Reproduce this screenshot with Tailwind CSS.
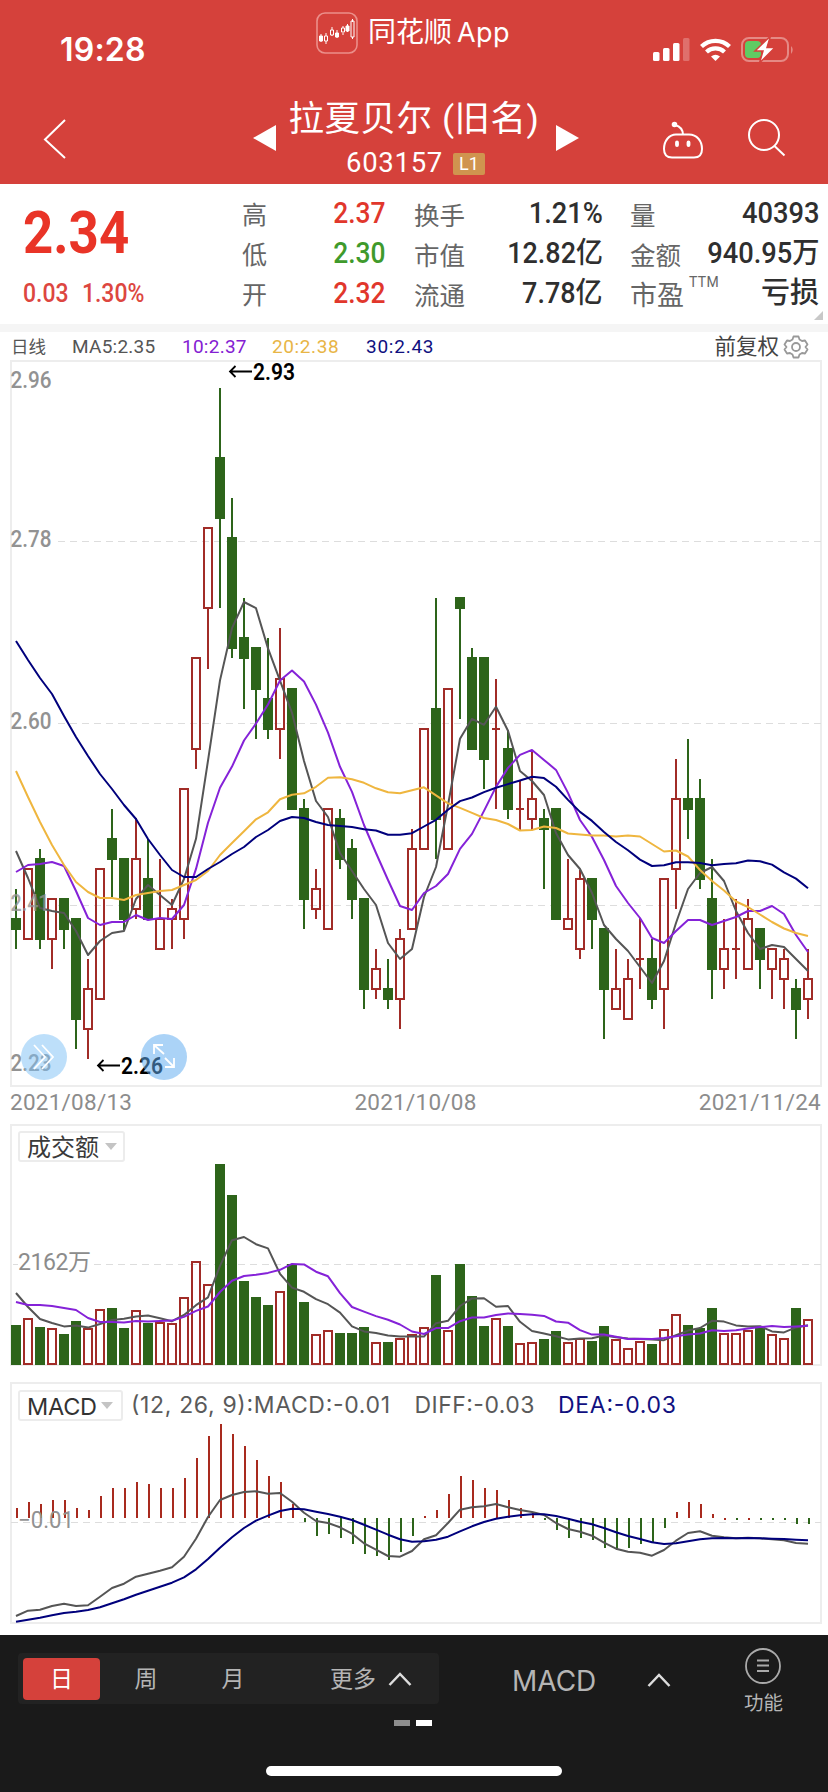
<!DOCTYPE html>
<html lang="zh-CN">
<head>
    <meta charset="UTF-8">
    <meta name="viewport" content="width=device-width, initial-scale=1.0">
    <title>拉夏贝尔 603157</title>
    <script src="https://cdn.jsdelivr.net/npm/@tailwindcss/browser@4"></script>
</head>
<body class="w-[828px] h-[1792px] overflow-hidden bg-white font-['Roboto','Noto_Sans_CJK_SC',sans-serif]">
    <!-- header -->
    <header class="h-[184px] bg-[#d5413b] text-white">
        <div class="h-[94px] flex items-start">
            <div class="w-[316px] pl-[60px] pt-[30px] font-['Inter'] font-semibold text-[32px] leading-[40px] tracking-[0.200px]">19:28</div>
            <div class="w-[337px] flex items-center pt-[10px] gap-[10px]">
                <svg width="42" height="42" viewBox="0 0 42 42" fill="none" stroke="#fff">
                    <rect x="1" y="1" width="40" height="40" rx="8" stroke="#eb8f8a" stroke-width="1.6"/>
                    <path d="M5 22v8M10 21v3M10 29v3M16 15v3M16 23v1M21 18v8M27 14v2M27 21v2M31.500 12v8M36.500 7v3M36.500 25v2" stroke-width="1"/>
                    <path d="M3.500 24h3v5h-3zM19.500 21h3v4h-3zM30 14h3v5h-3z" fill="#fff"/>
                    <path d="M8.500 24h3v5h-3zM14.500 18h3v5h-3zM25.500 16h3v4h-3zM35 9h3v16h-3z" stroke-width="1"/>
                </svg>
                <span class="text-[28px] leading-[44px] font-normal font-['Inter','Noto_Sans_CJK_SC',sans-serif] whitespace-nowrap">同花顺<span class="ml-[5px] text-[27px] tracking-[0.400px]">App</span></span>
            </div>
            <svg class="mt-[35px]" width="145" height="28" viewBox="653 35 145 28">
                <g fill="#fff">
                    <rect x="653" y="52" width="6.500" height="9" rx="1.500"/>
                    <rect x="663" y="48" width="6.500" height="13" rx="1.500"/>
                    <rect x="673" y="43" width="6.500" height="18" rx="1.500"/>
                    <rect x="683" y="38" width="6.500" height="23" rx="1.500" opacity=".25"/>
                </g>
                <g fill="none" stroke="#fff" stroke-width="4.200">
                    <path d="M701.500 46.500a20 20 0 0 1 28 0"/>
                    <path d="M706.500 52a13 13 0 0 1 18 0"/>
                </g>
                <path d="M711 56.500q4.500-3.500 9 0L715.500 61z" fill="#fff"/>
                <rect x="742" y="38" width="46" height="23" rx="7" fill="none" stroke="#e58a85" stroke-width="2"/>
                <path d="M791 46q3.500 3.500 0 8z" fill="#e58a85"/>
                <rect x="745" y="41" width="16" height="17" rx="4" fill="#5fcb63"/>
                <path d="M770.500 36L755 51h8l-3.500 12L775 47.500h-8z" fill="#fff" stroke="#d5413b" stroke-width="1.500"/>
            </svg>
        </div>
        <div class="h-[90px] flex items-start">
            <svg class="ml-[42px] mt-[23px]" width="26" height="44" viewBox="0 0 26 44" fill="none" stroke="#fff" stroke-width="2"><path d="M23 3L3 22.500L23 41"/></svg>
            <svg class="ml-[185px] mt-[31px]" width="23" height="26" viewBox="0 0 23 26" fill="#fff"><path d="M0 13L23 0v26z"/></svg>
            <div class="w-[280px] flex flex-col items-center">
                <h1 class="h-[52px] text-[35.500px] leading-[50px] font-normal whitespace-nowrap tracking-[0.500px] pr-[4px]">拉夏贝尔 (旧名)</h1>
                <div class="flex items-center gap-[10px] pt-[2px] pr-[1px]">
                    <span class="text-[27.500px] leading-[30px] tracking-[0.700px]">603157</span>
                    <span class="w-[32px] h-[22px] mt-[1px] bg-[#d0944f] text-[18px] leading-[22px] text-center rounded-[2px]">L1</span>
                </div>
            </div>
            <svg class="mt-[31px]" width="23" height="26" viewBox="0 0 23 26" fill="#fff"><path d="M23 13L0 0v26z"/></svg>
            <svg class="ml-[82px] mt-[26px]" width="44" height="40" viewBox="0 0 44 40" fill="none" stroke="#fff" stroke-width="2">
                <path d="M22 15C22 8 18 6 14 5"/>
                <circle cx="13.500" cy="4.500" r="1.800" fill="#fff"/>
                <path d="M15 14.500H28C36 14.500 41 21 41 29C41 35 38 37.500 33 37.500H11C6 37.500 3 35 3 29C3 21 8 14.500 15 14.500z"/>
                <path d="M16 22.500v2.500M27.500 22.500v2.500" stroke-width="3.800" stroke-linecap="round"/>
            </svg>
            <svg class="ml-[42px] mt-[24px]" width="40" height="40" viewBox="0 0 40 40" fill="none" stroke="#fff" stroke-width="2">
                <circle cx="17" cy="17" r="15"/><path d="M27.500 28L37.500 37.500"/>
            </svg>
        </div>
    </header>

    <!-- quote -->
    <section class="h-[140px] flex relative text-[#2f2f2f]">
        <div class="w-[242px] pl-[23px]">
            <div class="mt-[19px] h-[60px] text-[60px] leading-[60px] font-bold text-[#e93427] origin-left scale-x-[.88]">2.34</div>
            <div class="mt-[15px] flex text-[25px] leading-[32px] font-medium text-[#dd4640] origin-left scale-x-[.92]"><span class="w-[64px]">0.03</span><span>1.30%</span></div>
        </div>
        <div class="w-[144px] pt-[10px] text-[29px] font-medium">
            <div class="h-[40px] flex items-center justify-between"><span class="text-[25px] font-normal text-[#666] pt-[4px]">高</span><span class="origin-right scale-x-[.91] text-[#e1372c]">2.37</span></div>
            <div class="h-[40px] flex items-center justify-between"><span class="text-[25px] font-normal text-[#666] pt-[4px]">低</span><span class="origin-right scale-x-[.91] text-[#3f9a2c]">2.30</span></div>
            <div class="h-[40px] flex items-center justify-between"><span class="text-[25px] font-normal text-[#666] pt-[4px]">开</span><span class="origin-right scale-x-[.91] text-[#e1372c]">2.32</span></div>
        </div>
        <div class="ml-[28px] w-[189px] pt-[10px] text-[29px] font-medium">
            <div class="h-[40px] flex items-center justify-between"><span class="text-[25.500px] font-normal text-[#666] pt-[4px]">换手</span><span class="origin-right scale-x-[.94]">1.21%</span></div>
            <div class="h-[40px] flex items-center justify-between"><span class="text-[25.500px] font-normal text-[#666] pt-[4px]">市值</span><span class="origin-right scale-x-[.93]">12.82亿</span></div>
            <div class="h-[40px] flex items-center justify-between"><span class="text-[25.500px] font-normal text-[#666] pt-[4px]">流通</span><span class="origin-right scale-x-[.93]">7.78亿</span></div>
        </div>
        <div class="ml-[27px] w-[189px] pt-[10px] text-[29px] font-medium">
            <div class="h-[40px] flex items-center justify-between"><span class="text-[25.500px] font-normal text-[#666] pt-[4px]">量</span><span class="origin-right scale-x-[.94]">40393</span></div>
            <div class="h-[40px] flex items-center justify-between whitespace-nowrap"><span class="text-[25.500px] font-normal text-[#666] pt-[4px]">金额</span><span class="origin-right scale-x-[.94]">940.95万</span></div>
            <div class="h-[40px] flex items-center justify-between"><span class="flex text-[27px] font-normal text-[#666] pt-[5px]">市盈<span class="ml-[5px] text-[14px] leading-[12px] tracking-[0.300px]">TTM</span></span><span>亏损</span></div>
        </div>
        <svg class="absolute right-[5px] top-[127px]" width="9" height="9"><path d="M9 0v9H0z" fill="#c8c8c8"/></svg>
    </section>
    <div class="h-2 bg-[#f5f5f5]"></div>

    <!-- moving averages -->
    <div class="h-[29px] pt-px pl-[11px] pr-[19px] flex items-center text-[19px] whitespace-nowrap text-[#555] tracking-[0.250px]">
        <span class="w-[61px] text-[17.500px] tracking-normal">日线</span>
        <span class="w-[110px]">MA5:2.35</span>
        <span class="w-[90px] text-[#8420d2]">10:2.37</span>
        <span class="w-[94px] text-[#e8b546] tracking-[0.600px]">20:2.38</span>
        <span class="text-[#10107f] tracking-[0.750px]">30:2.43</span>
        <span class="ml-auto text-[21.500px] text-[#444] tracking-normal">前复权</span>
        <svg class="ml-[4px]" width="26" height="26" viewBox="0 0 26 26" fill="none" stroke="#999" stroke-width="1.800" stroke-linejoin="round">
            <path d="M10.500 2.500h5l1 3 2.500 1.500 3-.5 2.500 4-2 2.500 2 2.500-2.500 4-3-.5-2.500 1.500-1 3h-5l-1-3-2.500-1.500-3 .5-2.500-4 2-2.500-2-2.500 2.500-4 3 .5 2.500-1.500z"/>
            <circle cx="13" cy="13" r="4"/>
        </svg>
    </div>

    <!-- candles -->
    <svg class="block overflow-visible" width="828" height="726" viewBox="0 361 828 726" font-size="23">
        <rect x="11" y="361" width="810" height="725" fill="none" stroke="#ededed" stroke-width="2"/>
        <path d="M58 541.500H821M58 723.500H821M58 905.500H821" stroke="#ddd" stroke-dasharray="7 5"/>
        <g id="candles"></g>
        <g id="averages" fill="none" stroke-width="2" stroke-linejoin="round"></g>
        <g fill="#929292" font-weight="500">
            <text x="10.500" y="388" textLength="41" lengthAdjust="spacingAndGlyphs">2.96</text>
            <text x="10.500" y="547" textLength="41" lengthAdjust="spacingAndGlyphs">2.78</text>
            <text x="10.500" y="729" textLength="41" lengthAdjust="spacingAndGlyphs">2.60</text>
            <text x="10.500" y="911" textLength="39" lengthAdjust="spacingAndGlyphs" fill-opacity=".8">2.41</text>
            <text x="10.500" y="1071" textLength="41" lengthAdjust="spacingAndGlyphs">2.23</text>
        </g>
        <path d="M252 371.500H230M235.500 366l-5.500 5.500 5.500 5.500M120 1065.500H98M103.500 1060l-5.500 5.500 5.500 5.500" fill="none" stroke="#000" stroke-width="1.800"/>
        <text x="253" y="379.500" textLength="42" lengthAdjust="spacingAndGlyphs" font-weight="600">2.93</text>
        <text x="121" y="1073.500" textLength="42" lengthAdjust="spacingAndGlyphs" font-weight="600">2.26</text>
        <circle cx="44" cy="1057" r="23" fill="#7cbff6" fill-opacity=".5"/>
        <circle cx="164" cy="1057" r="23" fill="#60acf0" fill-opacity=".53"/>
        <path d="M34 1045l11 12-11 12M42 1045l11 12-11 12M164 1054l-10-9M154 1054v-9h9M165 1058l9 9M165 1067h9v-9" fill="none" stroke="#fff" stroke-width="1.800"/>
    </svg>
    <div class="h-[37px] pb-[5px] pl-[10px] pr-[7px] flex items-center justify-between text-[22.500px] text-[#8c8c8c] tracking-[0.250px]">
        <span>2021/08/13</span><span>2021/10/08</span><span>2021/11/24</span>
    </div>

    <!-- turnover -->
    <svg class="block" width="828" height="258" viewBox="0 1124 828 258">
        <rect x="11" y="1125" width="810" height="240" fill="none" stroke="#ededed" stroke-width="2"/>
        <path d="M13 1264.500h5M94 1264.500H821" stroke="#ddd" stroke-dasharray="7 5"/>
        <rect x="19" y="1132" width="105" height="29" rx="2" fill="#fff" stroke="#ececec" stroke-width="2"/>
        <text x="27" y="1156" font-size="24" fill="#3a3a3a">成交额</text>
        <path d="M105 1143h12l-6 7z" fill="#c4c4c4"/>
        <text x="18" y="1269.500" font-size="23" fill="#8c8c8c" textLength="73">2162万</text>
        <g id="volumes"></g>
        <g id="volume-averages" fill="none" stroke-width="2" stroke-linejoin="round"></g>
    </svg>

    <!-- macd -->
    <svg class="block" width="828" height="253" viewBox="0 1382 828 253" font-family="Inter">
        <rect x="11" y="1383" width="810" height="240" fill="none" stroke="#ededed" stroke-width="2"/>
        <path d="M11 1522.500H821" stroke="#ddd" stroke-dasharray="7 5"/>
        <rect x="19" y="1391" width="103" height="29" rx="2" fill="#fff" stroke="#ececec" stroke-width="2"/>
        <text x="27" y="1414.500" font-size="23.500" fill="#333" textLength="70">MACD</text>
        <path d="M101 1402h12l-6 7z" fill="#c4c4c4"/>
        <g font-size="23" fill="#5a5a5a">
            <text x="131" y="1412.500" textLength="259">(12, 26, 9):MACD:-0.01</text>
            <text x="414.500" y="1412.500" textLength="120">DIFF:-0.03</text>
            <text x="558" y="1412.500" textLength="118" fill="#10107f">DEA:-0.03</text>
        </g>
        <g id="sticks"></g>
        <g id="macd-lines" fill="none" stroke-width="2" stroke-linejoin="round"></g>
        <text x="18" y="1527.500" font-size="23" fill="#929292" textLength="56" lengthAdjust="spacingAndGlyphs" font-family="Roboto">−0.01</text>
    </svg>

    <!-- toolbar -->
    <footer class="h-[157px] bg-[#1a1a1a] text-[#b5b5b5]">
        <div class="h-[85px] flex items-start">
            <div class="ml-[18px] mt-[18px] w-[421px] h-[51px] pl-[5px] bg-[#222] rounded flex items-center text-[23px] font-normal leading-[42px]">
                <span class="w-[77px] h-[42px] leading-[44px] bg-[#d5413b] text-white text-center rounded">日</span>
                <span class="w-[92px] pt-[2px] text-center">周</span>
                <span class="w-[82px] pt-[2px] text-center">月</span>
                <span class="ml-[56px] pt-[2px]">更多</span>
                <svg class="ml-[12px]" width="24" height="16" viewBox="0 0 24 16" fill="none" stroke="#ddd" stroke-width="2.500"><path d="M1.500 14L12 3l10.500 11"/></svg>
            </div>
            <span class="ml-[73px] mt-[26px] text-[28px] leading-[40px] font-normal font-['Inter']">MACD</span>
            <svg class="ml-auto mr-[73px] mt-[37px]" width="24" height="16" viewBox="0 0 24 16" fill="none" stroke="#ddd" stroke-width="2.500"><path d="M1.500 14L12 3l10.500 11"/></svg>
            <div class="mr-[45px] mt-[13px] flex flex-col items-center">
                <svg width="36" height="36" viewBox="0 0 36 36" fill="none" stroke="#aaa" stroke-width="1.800"><circle cx="18" cy="18" r="17"/><path d="M12 12.500h12M12 17.500h12M12 23h12"/></svg>
                <span class="mt-[5px] text-[19.500px] leading-[30px] font-normal">功能</span>
            </div>
        </div>
        <div class="h-[6px] pl-[394px] flex gap-[6px]"><span class="w-[16px] bg-[#8e8e8e]"></span><span class="w-[16px] bg-white"></span></div>
        <div class="mt-[40px] ml-[266px] w-[296px] h-[10px] rounded-full bg-white"></div>
    </footer>

    <script>
        const GREEN = "#2d641a", RED = "#a12c27", GRAY = "#555", PURPLE = "#8522d8", YELLOW = "#efb63f", NAVY = "#00007c";
        // up, high, body top, body bottom, low
        const candles = [
            [0,889,918,930,949],[1,868,868,940,940],[0,849,858,940,949],[1,898,898,940,969],[0,898,898,930,949],
            [0,918,918,1020,1049],[1,959,988,1030,1059],[1,868,868,1000,1000],[0,809,838,860,897],[0,858,858,920,930],
            [1,818,858,910,919],[0,839,878,920,920],[1,859,918,950,950],[1,899,908,920,949],[1,788,788,920,939],
            [1,657,657,750,769],[1,527,527,609,669],[0,388,457,519,608],[0,498,537,649,658],[0,598,637,659,709],
            [0,647,647,690,739],[0,638,698,730,739],[1,628,678,730,759],[0,688,688,810,810],[0,799,808,900,929],
            [1,869,888,910,919],[1,808,808,930,930],[0,809,818,860,869],[0,839,848,900,919],[0,898,898,990,1009],
            [1,949,968,990,999],[0,959,988,1000,1009],[1,929,938,1000,1029],[1,829,848,930,930],[1,728,728,850,850],
            [0,598,708,820,859],[1,688,688,850,850],[0,597,597,609,719],[0,648,657,750,750],[0,657,657,760,789],
            [1,679,728,730,809],[0,730,748,810,819],[1,780,808,810,830],[1,750,798,820,830],[0,809,818,830,889],
            [0,808,808,920,920],[1,859,918,930,930],[1,870,878,950,959],[0,878,878,920,949],[0,928,928,990,1039],
            [1,949,988,1010,1010],[1,959,978,1020,1020],[1,918,958,960,989],[0,939,958,1000,1009],[1,878,878,990,1029],
            [1,759,798,870,909],[0,739,798,810,839],[0,779,798,880,889],[0,859,898,970,999],[1,919,948,970,989],
            [1,899,948,950,979],[1,899,918,970,970],[0,928,928,960,989],[1,948,948,970,999],[1,949,958,980,1009],
            [0,979,988,1010,1039],[1,949,978,1000,1019]
        ];
        const volumes = [1325,1318,1327,1328,1334,1321,1328,1309,1308,1328,1310,1323,1322,1323,1297,1261,1284,1164,1195,1281,1297,1305,1291,1264,1302,1334,1330,1333,1333,1327,1342,1342,1338,1334,1327,1275,1330,1264,1296,1326,1318,1326,1343,1342,1339,1331,1342,1338,1341,1326,1339,1348,1341,1344,1329,1314,1325,1328,1308,1333,1333,1330,1327,1334,1338,1308,1319];
        // stick lengths, positive is up
        const sticks = [10,16,14,18,18,10,8,22,30,30,36,34,30,30,40,60,82,94,84,72,58,42,36,14,-4,-18,-16,-20,-26,-36,-38,-42,-34,-18,2,8,24,42,38,30,28,18,10,6,-2,-12,-20,-20,-22,-30,-32,-30,-26,-25,-10,6,16,14,4,.5,-2,.5,-2,-2,-2,-6,-6];
        const diff = [738,722,719,708,701,708,706,680,654,641,620,611,602,592,560,506,441,390,375,366,364,371,369,395,428,453,459,472,491,520,539,558,560,543,508,496,459,419,412,409,402,412,420,426,435,459,477,485,497,518,536,545,548,557,540,512,489,484,497,502,505,503,505,508,511,519,521];
        const dea = [755,749,743,736,729,725,720,712,700,688,674,662,650,638,622,598,567,533,502,474,452,437,423,416,418,425,432,440,450,464,479,494,508,515,514,509,500,484,469,456,446,440,436,433,433,438,446,455,463,474,487,498,507,517,522,520,514,508,505,504,505,504,505,506,507,509,511];

        const px = i => 16 + 12 * i;
        const el = id => document.getElementById(id);

        function line(ys, color) {
            return `<polyline stroke="${color}" points="${ys.map((y, i) => px(i) + "," + y.toFixed(1)).join(" ")}"/>`;
        }
        // head holds the points that need days before the first one shown
        function average(values, n, head) {
            return values.map((v, i) => i < n - 1 ? head[i] : values.slice(i - n + 1, i + 1).reduce((a, b) => a + b) / n);
        }
        function bar(i, up, top, bottom) {
            const x = px(i);
            if (!up) return `<rect x="${x - 5}" y="${top}" width="10" height="${bottom - top}" fill="${GREEN}"/>`;
            if (bottom - top < 3) return `<rect x="${x - 4}" y="${top}" width="8" height="2" fill="${RED}"/>`;
            return `<rect x="${x - 4}" y="${top + 1}" width="8" height="${bottom - top - 2}" fill="none" stroke="${RED}" stroke-width="2"/>`;
        }

        el("candles").innerHTML = candles.map(([up, high, top, bottom, low], i) =>
            `<path d="M${px(i)} ${high}V${top}M${px(i)} ${bottom}V${low}" stroke="${up ? RED : GREEN}" stroke-width="2"/>` + bar(i, up, top, bottom)
        ).join("");

        const closes = candles.map(c => c[0] ? c[2] + 1 : c[3] - 1);
        el("averages").innerHTML =
            line(average(closes, 5, [851,878,908,911]), GRAY) +
            line(average(closes, 10, [872,865,864,862,866,891,918,925,922]), PURPLE) +
            line(average(closes, 20, [771,797,822,845,865,882,892,898,898,900,895,893,891,890,885,880,871,855,843]), YELLOW) +
            line(average(closes, 30, [641,660,678,694,716,737,756,774,789,805,819,839,855,870,877,877,869,862,854,847,837,830,821,817,818,822,825,826,827]), NAVY);

        el("volumes").innerHTML = volumes.map((y, i) => bar(i, candles[i][0], y, 1365)).join("");
        el("volume-averages").innerHTML =
            line(average(volumes, 5, [1293,1307,1319,1323]), GRAY) +
            line(average(volumes, 10, [1302,1305,1305,1306,1308,1310,1318,1322,1322]), PURPLE);

        el("sticks").innerHTML = sticks.map((s, i) => {
            const h = Math.max(Math.abs(s), 2);
            const y = s >= 1 ? 1518 - h : 1518;
            return `<rect x="${px(i)}" y="${y}" width="2" height="${h}" fill="${s > 0 ? "#a82a1e" : GREEN}"/>`;
        }).join("");
        el("macd-lines").innerHTML = line(diff.map(v => 1370 + v / 3), GRAY) + line(dea.map(v => 1370 + v / 3), NAVY);
    </script>
</body>
</html>
